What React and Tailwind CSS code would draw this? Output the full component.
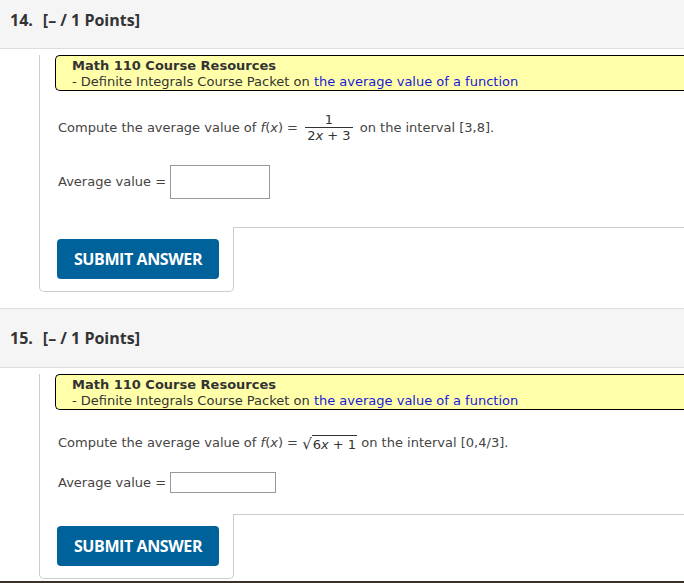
import React from "react";

const verdana = { fontFamily: '"DejaVu Sans", Verdana, sans-serif' };

function Header({ num, tall }) {
  return (
    <div
      className={`bg-[#f5f5f5] border-b border-[#dddddd] flex pl-[10px] ${tall ? "h-[60px] border-t items-center" : "h-[49px] items-start"}`}
    >
      <div
        className={`text-[16px] font-bold text-[#333333] ${tall ? "" : "mt-[8px]"}`}
        style={{ fontFamily: '"Open Sans", sans-serif' }}
      >
        {num}.<span className="ml-[10px]">[– / 1 Points]</span>
      </div>
    </div>
  );
}

function Resources() {
  return (
    <div
      className="ml-[15px] mt-[6px] h-[36px] bg-[#ffffaa] border border-r-0 border-black rounded-l-[5px] pl-[16px] pt-[2px] text-[13px] leading-[16px] text-[#333333] w-[660px] whitespace-nowrap"
      style={verdana}
    >
      <div className="font-bold">Math 110 Course Resources</div>
      <div>
        - Definite Integrals Course Packet on{" "}
        <span className="text-[#1a1ad6]">the average value of a function</span>
      </div>
    </div>
  );
}

function Submit() {
  return (
    <div className="flex h-[65px]">
      <div className="w-[195px] border-l border-b border-r border-[#cccccc] rounded-b-[5px] pl-[17px] pt-[12px]">
        <button
          className="w-[162px] h-[40px] bg-[#00629b] rounded-[4px] text-white text-[16px] font-bold tracking-[-0.4px]"
          style={{ fontFamily: '"Open Sans", sans-serif' }}
        >
          SUBMIT ANSWER
        </button>
      </div>
      <div className="flex-1 border-t border-[#cccccc]" />
    </div>
  );
}

export default function App() {
  return (
    <div className="w-[684px] h-[583px] overflow-hidden bg-white">
      <Header num="14" />
      <div className="ml-[39px]">
        <div className="border-l border-[#cccccc] pb-[28px]">
          <Resources />
          <div
            className="ml-[18px] mt-[19px] h-[36px] flex items-center text-[13px] text-[#444444] whitespace-nowrap"
            style={verdana}
          >
            <span>
              Compute the average value of <i>f</i>(<i>x</i>) ={"\u00a0"}
            </span>
            <span className="inline-flex flex-col items-center mx-[3px] text-[#333333] whitespace-nowrap">
              <span className="self-stretch text-center border-b border-[#333333] leading-[15px]">1</span>
              <span className="leading-[16px] px-[2px] whitespace-nowrap">
                2<i>x</i> + 3
              </span>
            </span>
            <span>{"\u00a0"}on the interval [3,8].</span>
          </div>
          <div
            className="ml-[18px] mt-[19px] h-[34px] flex items-center text-[13px] text-[#444444]"
            style={verdana}
          >
            <span>Average value =&nbsp;</span>
            <div className="w-[100px] h-[34px] border border-[#999999] bg-white" />
          </div>
        </div>
        <Submit />
      </div>
      <div className="h-[16px]" />
      <Header num="15" tall />
      <div className="ml-[39px]">
        <div className="border-l border-[#cccccc] pb-[21px]">
          <Resources />
          <div
            className="ml-[18px] mt-[23px] h-[20px] flex items-center text-[13px] text-[#444444] whitespace-nowrap"
            style={verdana}
          >
            <span>
              Compute the average value of <i>f</i>(<i>x</i>) ={"\u00a0"}
            </span>
            <span className="inline-flex items-end text-[#333333]">
              <span className="text-[15px] leading-[16px]">√</span>
              <span className="border-t border-[#333333] leading-[15px] pt-[1px] px-[1px]">
                6<i>x</i> + 1
              </span>
            </span>
            <span>{"\u00a0"}on the interval [0,4/3].</span>
          </div>
          <div
            className="ml-[18px] mt-[19px] h-[21px] flex items-center text-[13px] text-[#444444]"
            style={verdana}
          >
            <span>Average value =&nbsp;</span>
            <div className="w-[106px] h-[21px] border border-[#999999] bg-white" />
          </div>
        </div>
        <Submit />
      </div>
      <div className="mt-[2px] h-[4px] bg-[#3a3226]" />
    </div>
  );
}
